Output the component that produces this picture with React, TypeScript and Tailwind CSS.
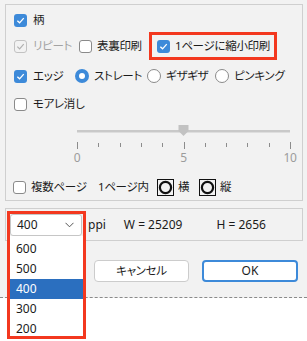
import React from 'react';

const ink = 'text-[#1b1b1b]';

function Check({ checked = false, disabled = false }: { checked?: boolean; disabled?: boolean }) {
  if (disabled) {
    return (
      <span className="flex w-[13px] h-[13px] shrink-0 items-center justify-center rounded-[3px] border border-[#c2c2c2]">
        <svg width="9" height="9" viewBox="0 0 10 10">
          <path d="M1.5 5.2 L4 7.6 L8.6 2.4" fill="none" stroke="#b0b0b0" strokeWidth="1.3" />
        </svg>
      </span>
    );
  }
  if (checked) {
    return (
      <span className="flex w-[13px] h-[13px] shrink-0 items-center justify-center rounded-[3px] bg-[#3d8ad9]">
        <svg width="9" height="9" viewBox="0 0 10 10">
          <path d="M1.5 5.2 L4 7.6 L8.6 2.4" fill="none" stroke="#fff" strokeWidth="1.5" />
        </svg>
      </span>
    );
  }
  return <span className="block w-[13px] h-[13px] shrink-0 rounded-[3px] border border-[#8a8a8a] bg-white" />;
}

function Radio({ on = false }: { on?: boolean }) {
  if (on) {
    return (
      <span className="flex w-[14px] h-[14px] shrink-0 items-center justify-center rounded-full bg-[#3d8ad9]">
        <span className="block w-[6px] h-[6px] rounded-full bg-white" />
      </span>
    );
  }
  return <span className="block w-[14px] h-[14px] shrink-0 rounded-full border border-[#8a8a8a] bg-white" />;
}

function BoxCircle() {
  return (
    <svg width="17" height="17" viewBox="0 0 17 17" className="block shrink-0">
      <rect x="0.5" y="0.5" width="16" height="16" fill="none" stroke="#111" strokeWidth="1" />
      <circle cx="8.5" cy="8.5" r="5.6" fill="none" stroke="#111" strokeWidth="2.2" />
    </svg>
  );
}

function Slider() {
  const ticks = Array.from({ length: 11 }, (_, i) => i);
  const step = 213 / 10;
  const cx = 4 + step * 5;
  return (
    <div className="h-[62px] pt-[9px]">
      <svg width="222" height="27" className="ml-[67px] block">
        <rect x="4" y="7" width="213" height="2.5" fill="#c9c9c9" />
        <polygon
          points={`${cx - 5},2 ${cx + 5},2 ${cx + 5},8 ${cx},13 ${cx - 5},8`}
          fill="#c2c2c2"
        />
        {ticks.map((i) => {
          const x = Math.round(4 + i * step) + 0.5;
          const long = i === 0 || i === 5 || i === 10;
          return (
            <line
              key={i}
              x1={x}
              x2={x}
              y1={long ? 19 : 20}
              y2={long ? 26 : 24}
              stroke="#8c8c8c"
              strokeWidth="1"
            />
          );
        })}
      </svg>
      <div className="ml-[71px] w-[213px] h-[16px] flex justify-between text-[12px] leading-[16px] text-[#9c9c9c]">
        <span className="w-0 flex justify-center">0</span>
        <span className="w-0 flex justify-center">5</span>
        <span className="w-0 flex justify-center">10</span>
      </div>
    </div>
  );
}

export default function App() {
  const options = ['600', '500', '400', '300', '200'];
  return (
    <div
      className={`relative w-[307px] h-[341px] overflow-hidden bg-white text-[11.5px] tracking-[-0.3px] whitespace-nowrap ${ink} font-['Noto_Sans','Noto_Sans_CJK_JP',sans-serif] [font-feature-settings:'palt']`}
    >
      <div className="h-[298px] bg-[#f2f2f2] border-b border-dashed border-[#8a8a8a] pt-[4px] pl-[5px] pr-[4px]">
        {/* main options */}
        <div className="h-[197px] border border-[#cfcfcf]">
          <div className="mt-[5px] h-[20px] flex items-center pl-[8px] gap-[6px]">
            <Check checked />
            <span>柄</span>
          </div>

          <div className="mt-[2px] h-[28px] flex items-center pl-[8px]">
            <div className="w-[65px] flex items-center gap-[6px]">
              <Check disabled />
              <span className="text-[#a3a3a3]">リピート</span>
            </div>
            <div className="w-[70px] flex items-center gap-[5px]">
              <Check />
              <span>表裏印刷</span>
            </div>
            <div className="h-[28px] w-[128px] shrink-0 border-[3px] border-[#f3381f] flex items-center pl-[5px] gap-[5px]">
              <Check checked />
              <span>1ページに縮小印刷</span>
            </div>
          </div>

          <div className="mt-[6px] h-[20px] flex items-center pl-[8px]">
            <div className="w-[61px] flex items-center gap-[6px]">
              <Check checked />
              <span>エッジ</span>
            </div>
            <div className="w-[72px] flex items-center gap-[5px]">
              <Radio on />
              <span>ストレート</span>
            </div>
            <div className="w-[68px] flex items-center gap-[5px]">
              <Radio />
              <span>ギザギザ</span>
            </div>
            <div className="flex items-center gap-[5px]">
              <Radio />
              <span>ピンキング</span>
            </div>
          </div>

          <div className="mt-[8px] h-[20px] flex items-center pl-[8px] gap-[6px]">
            <Check />
            <span>モアレ消し</span>
          </div>

          <Slider />

          <div className="mt-[1px] h-[20px] flex items-center pl-[7px]">
            <div className="w-[85px] flex items-center gap-[5px]">
              <Check />
              <span>複数ページ</span>
            </div>
            <span className="w-[59px]">1ページ内</span>
            <BoxCircle />
            <span className="ml-[4px] w-[21px]">横</span>
            <BoxCircle />
            <span className="ml-[4px]">縦</span>
          </div>
        </div>

        {/* resolution */}
        <div className="mt-[7px] h-[33px] border border-[#cfcfcf] flex items-center tracking-normal text-[12px]">
          <div className="ml-[4px] w-[72px] h-[22px] bg-white border border-[#c6c6c6] rounded-[3px] flex items-center justify-between pl-[6px] pr-[7px]">
            <span>400</span>
            <svg width="9" height="6" viewBox="0 0 9 6">
              <path d="M0.5 0.8 L4.5 4.8 L8.5 0.8" fill="none" stroke="#555" strokeWidth="1" />
            </svg>
          </div>
          <span className="ml-[6px]">ppi</span>
          <span className="ml-[18px]">W = 25209</span>
          <span className="ml-[34px]">H = 2656</span>
        </div>

        {/* buttons */}
        <div className="mt-[19px] h-[22px] flex">
          <button className="ml-[89px] w-[95px] h-[22px] bg-white border border-[#cccccc] rounded-[4px]">
            キャンセル
          </button>
          <button className="ml-[13px] w-[96px] h-[22px] bg-white border-2 border-[#3d8ad9] rounded-[4px] text-[12px] tracking-normal">
            OK
          </button>
        </div>
      </div>

      {/* open dropdown list */}
      <div className="absolute left-[9px] top-[236px] w-[74px] h-[102px] bg-white pt-[3px] text-[12px] tracking-normal">
        {options.map((o) => (
          <div
            key={o}
            className={`h-[20px] leading-[20px] pl-[7px] ${o === '400' ? 'bg-[#2b6fbf] text-white' : ''}`}
          >
            {o}
          </div>
        ))}
      </div>

      {/* highlight frame */}
      <div className="absolute left-[7px] top-[211px] w-[79px] h-[128px] border-[3px] border-[#f3381f] pointer-events-none" />
    </div>
  );
}
